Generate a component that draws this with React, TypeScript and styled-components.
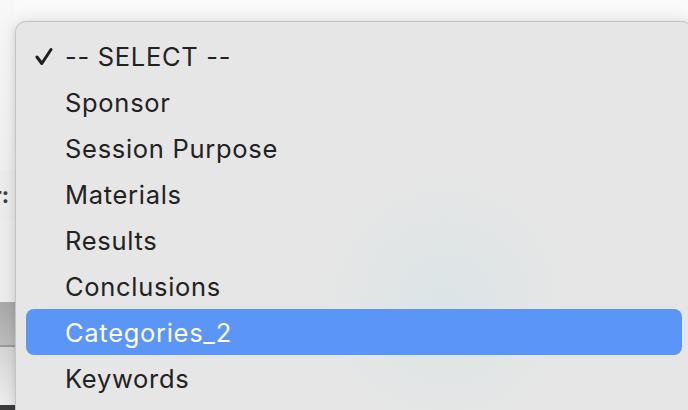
import React from "react";
import styled, { createGlobalStyle } from "styled-components";

const Global = createGlobalStyle`
  html, body { margin: 0; padding: 0; width: 688px; height: 410px; overflow: hidden; }
  body { background: #f5f5f5; font-family: Inter, "Noto Sans", "Liberation Sans", sans-serif; }
`;

const Page = styled.div`
  display: flex;
  align-items: flex-start;
  width: 688px;
  height: 410px;
  overflow: hidden;
  background: linear-gradient(#fafafa, #f1f1f1);
`;

const Strip = styled.div`
  flex: none;
  width: 15px;
  height: 410px;
  display: flex;
  flex-direction: column;
  overflow: hidden;
`;

const StripBlock = styled.div<{ $h: number; $bg: string }>`
  flex: none;
  height: ${(p) => p.$h}px;
  background: ${(p) => p.$bg};
  display: flex;
  align-items: center;
  justify-content: flex-end;
  padding-right: 6px;
  box-sizing: border-box;
`;

const StripLabel = styled.span`
  font-family: Inter, "Liberation Sans", sans-serif;
  font-weight: 700;
  font-size: 22px;
  color: #3a3a3a;
  line-height: 1;
  white-space: nowrap;
`;

const Menu = styled.div`
  flex: none;
  margin-top: 21px;
  width: 678px;
  height: 440px;
  box-sizing: border-box;
  border: 1px solid #c4c4c4;
  border-radius: 11px;
  background:
    radial-gradient(circle at 430px 280px, rgba(200, 225, 230, 0.35) 0, rgba(215, 228, 232, 0.2) 90px, rgba(230, 230, 230, 0) 130px),
    #e6e6e6;
  box-shadow: 0 0 18px rgba(0, 0, 0, 0.12), 0 2px 6px rgba(0, 0, 0, 0.08);
  padding: 11px 10px 0 10px;
  display: flex;
  flex-direction: column;
`;

const Item = styled.div<{ $active?: boolean }>`
  height: 46px;
  display: flex;
  align-items: center;
  border-radius: 8px;
  background: ${(p) => (p.$active ? "#5b95f6" : "transparent")};
  color: ${(p) => (p.$active ? "#ffffff" : "#222222")};
  font-size: 25.5px;
  letter-spacing: 0.7px;
`;

const CheckBox = styled.span`
  flex: none;
  width: 39px;
  display: flex;
  align-items: center;
  justify-content: flex-start;
  padding-left: 9px;
  box-sizing: border-box;
`;

const Label = styled.span`
  white-space: nowrap;
`;

const items = [
  "-- SELECT --",
  "Sponsor",
  "Session Purpose",
  "Materials",
  "Results",
  "Conclusions",
  "Categories_2",
  "Keywords",
];

const Check = () => (
  <svg width="18" height="19" viewBox="0 0 18 19" fill="none">
    <path d="M2 10 L6.8 16.5 L16 2.5" stroke="#1e1e1e" strokeWidth="3" strokeLinecap="round" strokeLinejoin="round" />
  </svg>
);

export default function App() {
  return (
    <>
      <Global />
      <Page>
        <Strip>
          <StripBlock $h={170} $bg="linear-gradient(#f8f8f8, #f0f0f0)" />
          <StripBlock $h={50} $bg="#ededed">
            <StripLabel>r:</StripLabel>
          </StripBlock>
          <StripBlock $h={82} $bg="#eeeeee" />
          <StripBlock $h={43} $bg="linear-gradient(#a9a9a9, #bdbdbd)" />
          <StripBlock $h={2} $bg="#9a9a9a" />
          <StripBlock $h={58} $bg="linear-gradient(#d6d6d6, #efefef)" />
          <StripBlock $h={5} $bg="#3d3d3f" />
        </Strip>
        <Menu>
          {items.map((t, i) => (
            <Item key={t} $active={t === "Categories_2"}>
              <CheckBox>{i === 0 ? <Check /> : null}</CheckBox>
              <Label>{t}</Label>
            </Item>
          ))}
        </Menu>
      </Page>
    </>
  );
}
